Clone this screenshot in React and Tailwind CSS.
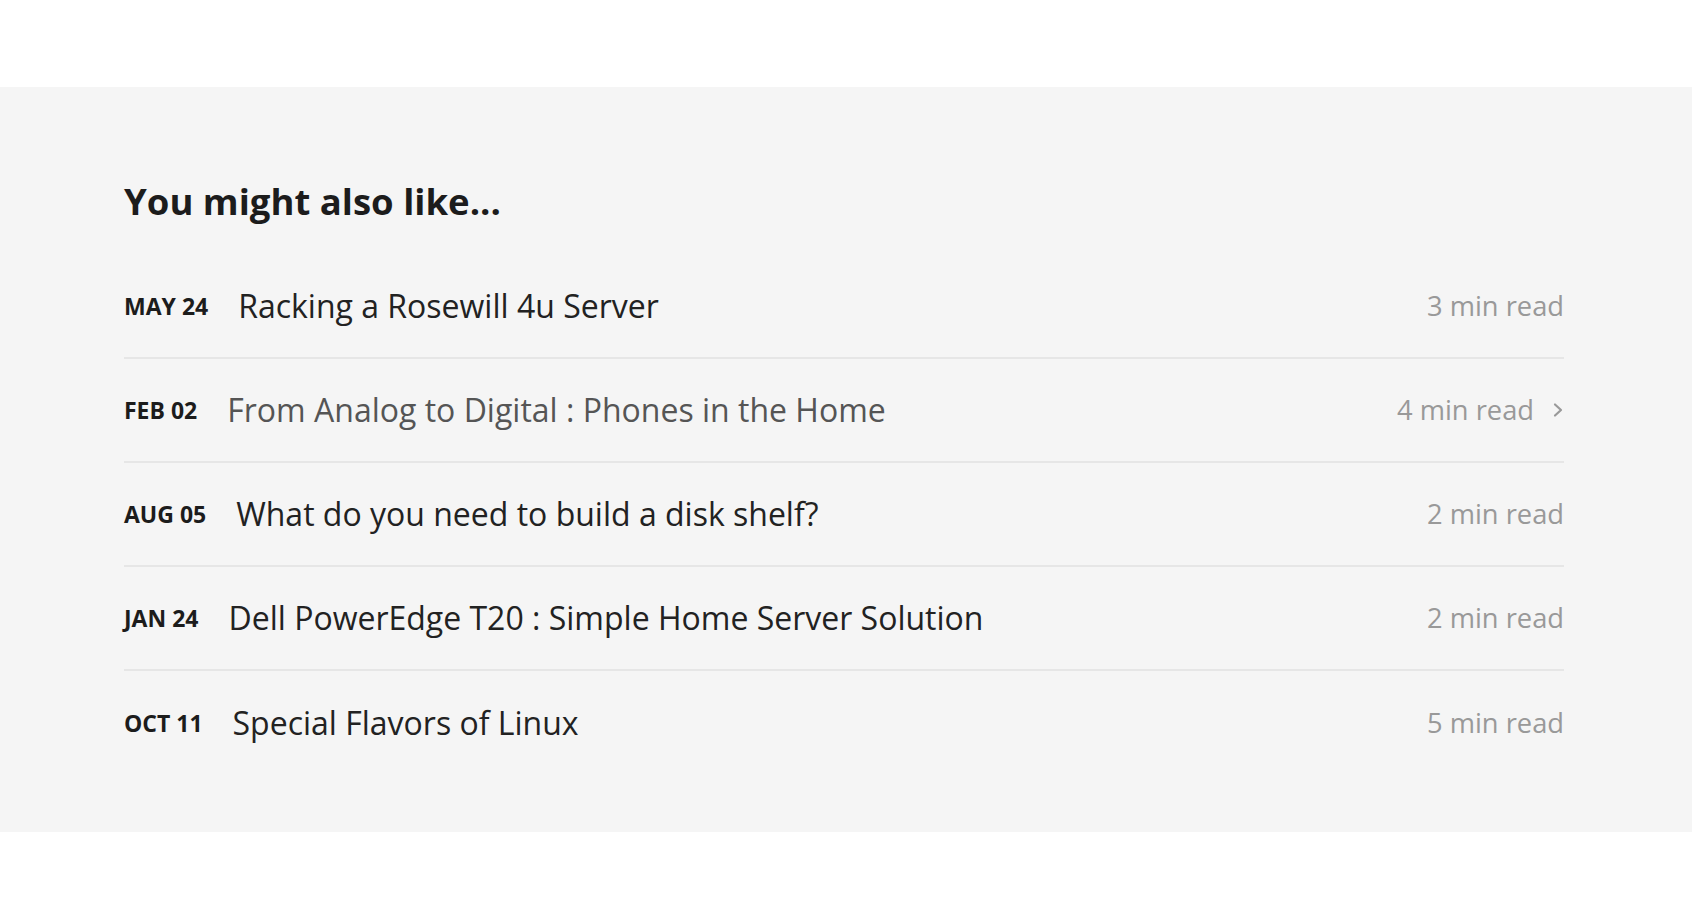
import React from 'react';

const posts = [
  { date: 'MAY 24', title: 'Racking a Rosewill 4u Server', read: '3 min read' },
  { date: 'FEB 02', title: 'From Analog to Digital : Phones in the Home', read: '4 min read', active: true },
  { date: 'AUG 05', title: 'What do you need to build a disk shelf?', read: '2 min read' },
  { date: 'JAN 24', title: 'Dell PowerEdge T20 : Simple Home Server Solution', read: '2 min read' },
  { date: 'OCT 11', title: 'Special Flavors of Linux', read: '5 min read' },
];

const PostRow = ({ post, last }) => (
  <a
    href="#"
    className={`flex items-center justify-between h-[104px] ${last ? '' : 'border-b-2 border-[#e6e6e6]'}`}
  >
    <div className="flex items-center">
      <span className="text-[23px] font-bold text-[#1c1c1c] mr-[30px]">{post.date}</span>
      <span className={`text-[32px] ${post.active ? 'text-[#555]' : 'text-[#222]'}`}>{post.title}</span>
    </div>
    <div className="flex items-center text-[#999]">
      <span className="text-[27.3px]">{post.read}</span>
      {post.active && (
        <svg className="ml-[18px] w-[12px] h-[16px]" viewBox="0 0 12 16" fill="none" stroke="currentColor" strokeWidth="2.2" strokeLinecap="round" strokeLinejoin="round">
          <path d="M3 2.5 L9 8 L3 13.5" />
        </svg>
      )}
    </div>
  </a>
);

export default function App() {
  return (
    <div className="bg-white min-h-[908px] pt-[87px] font-['Open_Sans','Lato',sans-serif]">
      <section className="bg-[#f5f5f5] pt-[90px] pb-[57px]">
        <div className="w-[1440px] ml-[124px]">
          <h2 className="text-[36.5px] leading-[48px] font-bold text-[#1c1c1c] mb-[30px]">You might also like...</h2>
          <div>
            {posts.map((p, i) => (
              <PostRow key={p.date} post={p} last={i === posts.length - 1} />
            ))}
          </div>
        </div>
      </section>
    </div>
  );
}
